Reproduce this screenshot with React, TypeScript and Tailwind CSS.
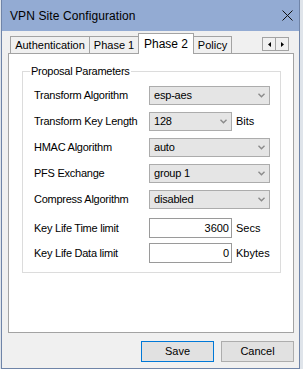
import React from "react";

const font = { fontFamily: '"Liberation Sans", Arial, sans-serif' };

function Chevron() {
  return (
    <svg width="7" height="5" viewBox="0 0 7 5" className="shrink-0">
      <polyline points="0.5,0.8 3.5,3.8 6.5,0.8" fill="none" stroke="#8a8a8a" strokeWidth="1.4" />
    </svg>
  );
}

function Select({ value, wide }: { value: string; wide?: boolean }) {
  return (
    <div
      className={`${wide ? "w-[121px]" : "w-[83px]"} h-[19px] border border-[#acacac] bg-[#e5e5e5] flex items-center justify-between pl-[4px] pr-[4px] text-[11px] text-black`}
    >
      <span className="tracking-[-0.2px]">{value}</span>
      <Chevron />
    </div>
  );
}

function Input({ value }: { value: string }) {
  return (
    <div className="w-[83px] h-[20px] border border-[#9a9a9a] bg-white flex items-center justify-end pr-[2px] text-[11px] text-black">
      {value}
    </div>
  );
}

function Row({ label, children, className = "" }: { label: string; children: React.ReactNode; className?: string }) {
  return (
    <div className={`flex items-center ${className}`}>
      <div className="w-[115px] text-[11px] text-black tracking-[-0.25px] whitespace-nowrap">{label}</div>
      {children}
    </div>
  );
}

export default function App() {
  return (
    <div className="w-[303px] h-[369px] bg-[#dfe4ea] flex overflow-hidden" style={font}>
      <div className="ml-[1px] w-[299px] h-[369px] flex flex-col border-x border-b border-[#6f84a8] bg-[#f0f0f0]">
        {/* Title bar */}
        <div className="h-[31px] shrink-0 bg-[#93abd3] flex items-center justify-between pl-[8px] pr-[5px]">
          <span className="text-[12px] text-black tracking-[0.1px]">VPN Site Configuration</span>
          <svg width="13" height="11" viewBox="0 0 13 11">
            <line x1="1.5" y1="0.5" x2="11.5" y2="10.5" stroke="#111" strokeWidth="1" />
            <line x1="11.5" y1="0.5" x2="1.5" y2="10.5" stroke="#111" strokeWidth="1" />
          </svg>
        </div>

        <div className="flex flex-col pl-[6px] pr-[5px]">
          {/* Tab strip */}
          <div className="h-[23px] -mb-px relative z-10 flex items-end pl-[2px] pr-[5px] text-[11px] text-black">
            <div className="w-[80px] h-[17px] mb-px border border-b-0 border-[#a3a3a3] bg-[#f0f0f0] flex items-center justify-center">
              Authentication
            </div>
            <div className="w-[50px] h-[17px] mb-px -ml-px border border-b-0 border-[#a3a3a3] bg-[#f0f0f0] flex items-center justify-center">
              Phase 1
            </div>
            <div className="w-[56px] h-[21px] -ml-px border border-b-0 border-[#a3a3a3] bg-white flex items-center justify-center relative z-10 text-[12px]">
              Phase 2
            </div>
            <div className="w-[39px] h-[17px] mb-px -ml-px border border-b-0 border-[#a3a3a3] bg-[#f0f0f0] flex items-center justify-center">
              Policy
            </div>
            <div className="ml-auto self-start mt-[6px] flex">
              <div className="w-[14px] h-[14px] border border-[#a3a3a3] bg-[#f0f0f0] flex items-center justify-center">
                <svg width="3" height="5" viewBox="0 0 3 5"><polygon points="3,0 3,5 0,2.5" fill="#000" /></svg>
              </div>
              <div className="w-[14px] h-[14px] -ml-px border border-[#a3a3a3] bg-[#f0f0f0] flex items-center justify-center">
                <svg width="3" height="5" viewBox="0 0 3 5"><polygon points="0,0 0,5 3,2.5" fill="#000" /></svg>
              </div>
            </div>
          </div>

          {/* Tab panel */}
          <div className="h-[280px] border border-[#a3a3a3] bg-white flex flex-col">
            <div className="relative mt-[17px] ml-[13px] mr-[12px] border border-[#dcdcdc] pt-[14px] pb-[9px] pl-[11px]">
              <span className="absolute left-[7px] top-[-8px] leading-[14px] px-[1px] bg-white text-[11px] text-black tracking-[-0.25px]">
                Proposal Parameters
              </span>
              <Row label="Transform Algorithm">
                <Select value="esp-aes" wide />
              </Row>
              <Row label="Transform Key Length" className="mt-[7px]">
                <Select value="128" />
                <span className="ml-[4px] text-[11px] text-black">Bits</span>
              </Row>
              <Row label="HMAC Algorithm" className="mt-[7px]">
                <Select value="auto" wide />
              </Row>
              <Row label="PFS Exchange" className="mt-[7px]">
                <Select value="group 1" wide />
              </Row>
              <Row label="Compress Algorithm" className="mt-[7px]">
                <Select value="disabled" wide />
              </Row>
              <Row label="Key Life Time limit" className="mt-[9px]">
                <Input value="3600" />
                <span className="ml-[4px] text-[11px] text-black">Secs</span>
              </Row>
              <Row label="Key Life Data limit" className="mt-[5px]">
                <Input value="0" />
                <span className="ml-[4px] text-[11px] text-black">Kbytes</span>
              </Row>
            </div>
          </div>

          {/* Buttons */}
          <div className="mt-[8px] flex justify-end gap-[7px]">
            <div className="w-[73px] h-[21px] border border-[#0078d7] bg-[#e1e1e1] flex items-center justify-center text-[11px] text-black">
              Save
            </div>
            <div className="w-[73px] h-[21px] border border-[#adadad] bg-[#e1e1e1] flex items-center justify-center text-[11px] text-black">
              Cancel
            </div>
          </div>
        </div>
      </div>
    </div>
  );
}
